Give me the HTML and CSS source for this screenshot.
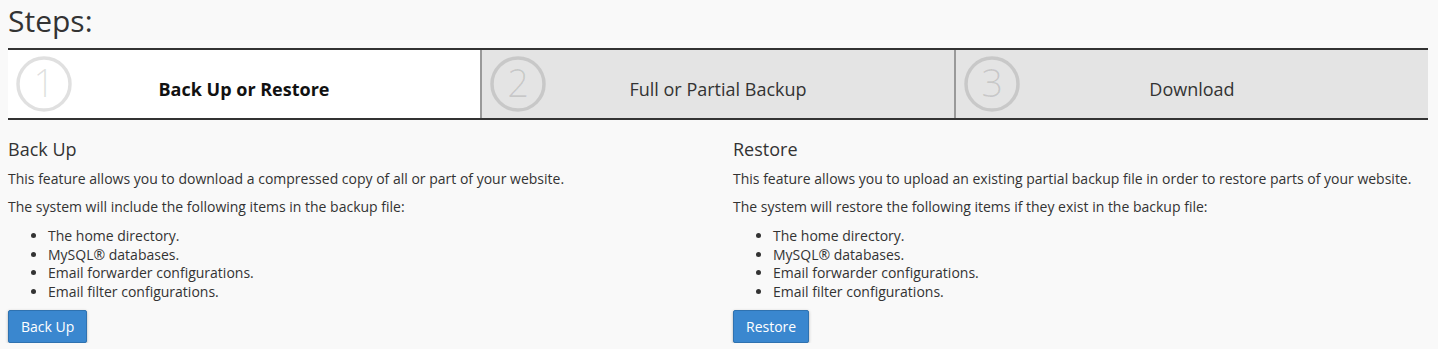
FILE: index.html
```html
<!doctype html>
<html lang="en">
  <head>
    <meta charset="UTF-8" />
    <title>Backup Wizard</title>
    <link rel="stylesheet" href="styles.css">
  </head>
  <body>
    <h1 class="page-title">Steps:</h1>

    <div class="steps">
      <div class="step active">
        <svg class="step-num" width="56" height="56" viewBox="0 0 56 56">
          <circle cx="28" cy="28" r="26" />
          <text x="28" y="41" text-anchor="middle">1</text>
        </svg>
        <span class="step-label">Back Up or Restore</span>
      </div>
      <div class="step">
        <svg class="step-num" width="56" height="56" viewBox="0 0 56 56">
          <circle cx="28" cy="28" r="26" />
          <text x="28" y="41" text-anchor="middle">2</text>
        </svg>
        <span class="step-label">Full or Partial Backup</span>
      </div>
      <div class="step">
        <svg class="step-num" width="56" height="56" viewBox="0 0 56 56">
          <circle cx="28" cy="28" r="26" />
          <text x="28" y="41" text-anchor="middle">3</text>
        </svg>
        <span class="step-label">Download</span>
      </div>
    </div>

    <div class="columns">
      <div class="panel">
        <h3>Back Up</h3>
        <p>This feature allows you to download a compressed copy of all or part of your website.</p>
        <p>The system will include the following items in the backup file:</p>
        <ul>
          <li>The home directory.</li>
          <li>MySQL® databases.</li>
          <li>Email forwarder configurations.</li>
          <li>Email filter configurations.</li>
        </ul>
        <button class="btn">Back Up</button>
      </div>

      <div class="panel">
        <h3>Restore</h3>
        <p>This feature allows you to upload an existing partial backup file in order to restore parts of your website.</p>
        <p>The system will restore the following items if they exist in the backup file:</p>
        <ul>
          <li>The home directory.</li>
          <li>MySQL® databases.</li>
          <li>Email forwarder configurations.</li>
          <li>Email filter configurations.</li>
        </ul>
        <button class="btn">Restore</button>
      </div>
    </div>
  </body>
</html>
```

FILE: styles.css
```css
body {
  margin: 0;
  padding: 0 10px 0 8px;
  background: #f9f9f9;
  color: #333;
  font-family: "Open Sans", "DejaVu Sans", sans-serif;
  font-size: 14px;
  line-height: 1.3333;
}

.page-title {
  margin: 0 0 6px;
  font-size: 30px;
  font-weight: 400;
  line-height: 42px;
}

.steps {
  display: flex;
  border-top: 2px solid #333;
  border-bottom: 2px solid #333;
}

.step {
  position: relative;
  flex: 1;
  height: 68px;
  display: flex;
  align-items: center;
  justify-content: center;
  background: #e4e4e4;
  border-left: 2px solid #999;
}

.step.active {
  background: #fff;
  border-left: 0;
}

.step-num {
  position: absolute;
  left: 8px;
  top: 6px;
}

.step-num circle {
  fill: none;
  stroke: rgba(0, 0, 0, 0.12);
  stroke-width: 3.5;
}

.step-num text {
  fill: rgba(0, 0, 0, 0.12);
  font-family: "Open Sans", sans-serif;
  font-size: 38px;
  font-weight: 300;
}

.step-label {
  position: relative;
  padding-top: 9px;
  font-size: 18px;
  line-height: 20px;
}

.step.active .step-label {
  font-weight: 700;
  color: #111;
}

.columns {
  display: grid;
  grid-template-columns: 1fr 1fr;
  gap: 30px;
}

.panel h3 {
  margin: 20px 0 10px;
  font-size: 18px;
  font-weight: 400;
  line-height: 1.1;
}

.panel p {
  margin: 0 0 10px;
}

.panel ul {
  margin: 0 0 8px;
  padding-left: 40px;
}

.btn {
  padding: 6px 12px;
  font-family: inherit;
  font-size: 14px;
  line-height: 19px;
  color: #fff;
  background: #3a87cf;
  border: 1px solid #2f72b0;
  border-radius: 2px;
  box-shadow: 0 1px 3px rgba(0, 0, 0, 0.3);
}
```
